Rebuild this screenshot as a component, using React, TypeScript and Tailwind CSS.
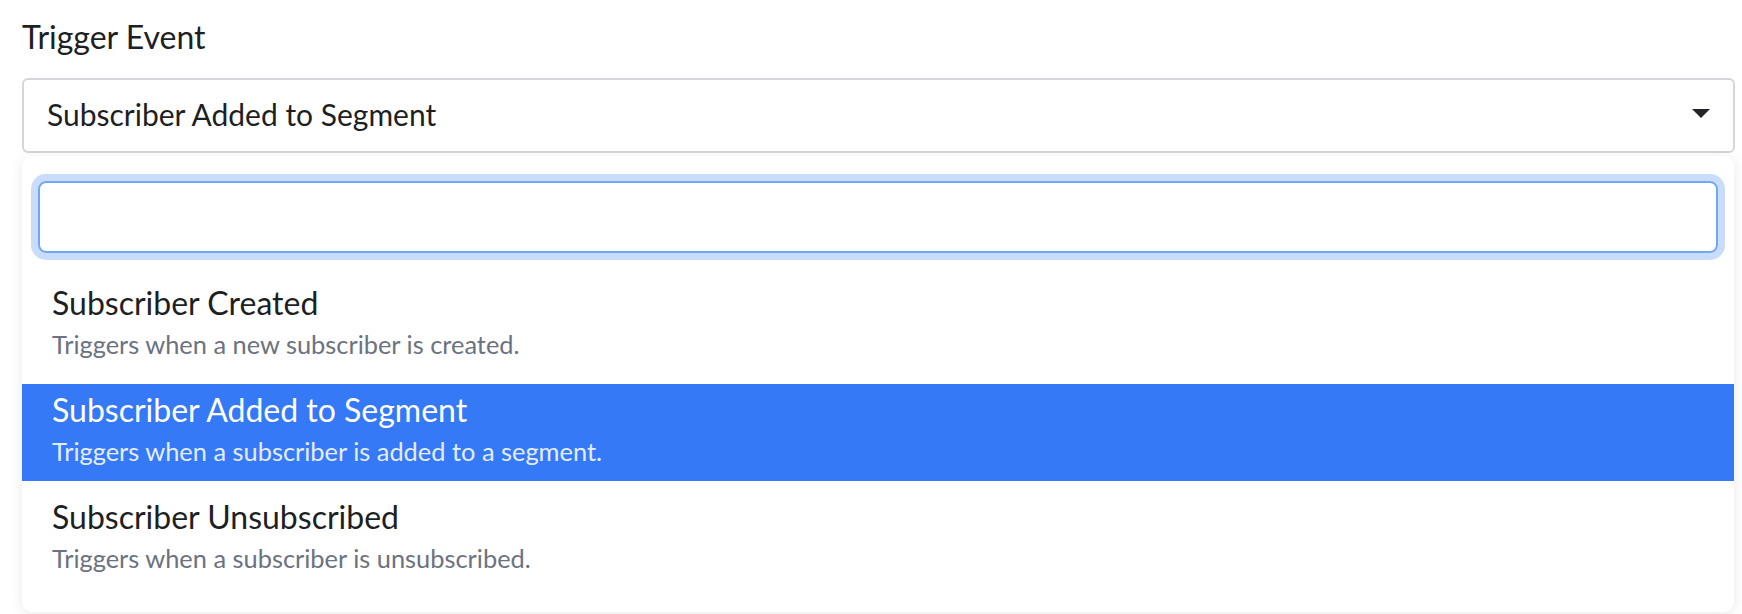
import React, { useState } from 'react';

type TriggerOption = {
  id: string;
  title: string;
  description: string;
};

const OPTIONS: TriggerOption[] = [
  { id: 'created', title: 'Subscriber Created', description: 'Triggers when a new subscriber is created.' },
  { id: 'segment', title: 'Subscriber Added to Segment', description: 'Triggers when a subscriber is added to a segment.' },
  { id: 'unsubscribed', title: 'Subscriber Unsubscribed', description: 'Triggers when a subscriber is unsubscribed.' },
];

const CaretDown: React.FC = () => (
  <svg width="18" height="9" viewBox="0 0 18 9" className="shrink-0">
    <path d="M0 0 H18 L9 9 Z" fill="#222428" />
  </svg>
);

const App: React.FC = () => {
  const [selected, setSelected] = useState('segment');
  const [query, setQuery] = useState('');

  const current = OPTIONS.find((o) => o.id === selected);
  const filtered = OPTIONS.filter((o) => o.title.toLowerCase().includes(query.toLowerCase()));

  return (
    <div className="min-h-screen bg-white pt-[18px] pl-[21px] pr-[8px] font-['Lato',sans-serif] text-[#1d1f23]">
      <label className="block text-[32px] leading-[38px] pl-px">Trigger Event</label>

      <div className="mt-[22px]">
        <button className="w-full h-[75px] flex items-center justify-between pb-[4px] pl-[23px] pr-[23px] border-2 border-[#d3d6db] rounded-[6px] bg-white text-left ml-px">
          <span className="text-[30px] leading-[36px] text-[#1d1f23]">{current?.title}</span>
          <CaretDown />
        </button>

        <div className="mt-[3px] ml-px bg-white rounded-[10px] shadow-[0_2px_14px_rgba(15,23,42,0.09)] pt-[25px] pb-[24px]">
          <div className="px-[16px]">
            <input
              value={query}
              onChange={(e) => setQuery(e.target.value)}
              className="w-full h-[72px] rounded-[8px] border-2 border-[#6ea9f7] shadow-[0_0_0_7px_#cadcfb] outline-none px-4 text-[30px]"
            />
          </div>

          <ul className="mt-[24px] flex flex-col gap-[10px]">
            {filtered.map((o) => {
              const active = o.id === selected;
              return (
                <li
                  key={o.id}
                  onClick={() => setSelected(o.id)}
                  className={`pt-[6px] pb-[8px] pl-[30px] pr-[30px] cursor-pointer ${active ? 'bg-[#3579f6]' : 'bg-white'}`}
                >
                  <div className={`text-[32px] leading-[40px] ${active ? 'text-white' : 'text-[#1d1f23]'}`}>{o.title}</div>
                  <div className={`text-[25.4px] leading-[43px] ${active ? 'text-[#e4edfd]' : 'text-[#6b7280]'}`}>{o.description}</div>
                </li>
              );
            })}
          </ul>
        </div>
      </div>
    </div>
  );
};

export default App;
